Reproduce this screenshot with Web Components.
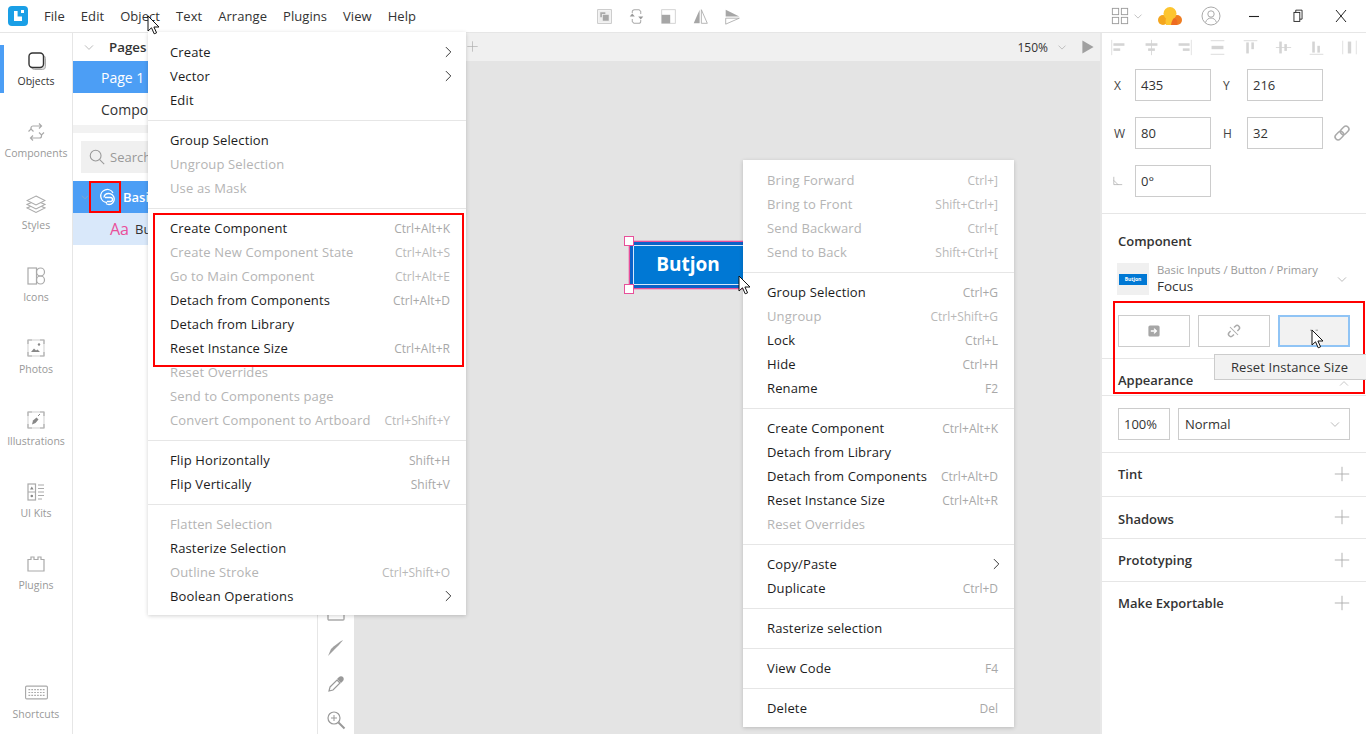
<!DOCTYPE html>
<html lang="en"><head><meta charset="utf-8"><title>Lunacy</title>
<style>
html,body{margin:0;height:100%;overflow:hidden}
body{font-family:"Open Sans","Noto Sans",sans-serif;color:#222;background:#fff}
</style></head><body>
<app-shell>
  <app-titlebar slot="top"></app-titlebar>
  <app-rail slot="rail"></app-rail>
  <app-pages slot="pages"></app-pages>
  <app-tools slot="tools"></app-tools>
  <app-canvas slot="canvas"></app-canvas>
  <app-inspector slot="inspector"></app-inspector>
</app-shell>

<ctx-menu style="left:148px;top:32px;width:318px;--pl:22px" id="m1">
  <menu-row label="Create" arrow></menu-row>
  <menu-row label="Vector" arrow></menu-row>
  <menu-row label="Edit"></menu-row>
  <menu-sep></menu-sep>
  <menu-row label="Group Selection"></menu-row>
  <menu-row label="Ungroup Selection" off></menu-row>
  <menu-row label="Use as Mask" off></menu-row>
  <menu-sep></menu-sep>
  <menu-row label="Create Component" key="Ctrl+Alt+K"></menu-row>
  <menu-row label="Create New Component State" key="Ctrl+Alt+S" off></menu-row>
  <menu-row label="Go to Main Component" key="Ctrl+Alt+E" off></menu-row>
  <menu-row label="Detach from Components" key="Ctrl+Alt+D"></menu-row>
  <menu-row label="Detach from Library"></menu-row>
  <menu-row label="Reset Instance Size" key="Ctrl+Alt+R"></menu-row>
  <menu-row label="Reset Overrides" off></menu-row>
  <menu-row label="Send to Components page" off></menu-row>
  <menu-row label="Convert Component to Artboard" key="Ctrl+Shift+Y" off></menu-row>
  <menu-sep></menu-sep>
  <menu-row label="Flip Horizontally" key="Shift+H"></menu-row>
  <menu-row label="Flip Vertically" key="Shift+V"></menu-row>
  <menu-sep></menu-sep>
  <menu-row label="Flatten Selection" off></menu-row>
  <menu-row label="Rasterize Selection"></menu-row>
  <menu-row label="Outline Stroke" key="Ctrl+Shift+O" off></menu-row>
  <menu-row label="Boolean Operations" arrow></menu-row>
</ctx-menu>

<ctx-menu style="left:743px;top:160px;width:271px;--pl:24px" id="m2">
  <menu-row label="Bring Forward" key="Ctrl+]" off></menu-row>
  <menu-row label="Bring to Front" key="Shift+Ctrl+]" off></menu-row>
  <menu-row label="Send Backward" key="Ctrl+[" off></menu-row>
  <menu-row label="Send to Back" key="Shift+Ctrl+[" off></menu-row>
  <menu-sep></menu-sep>
  <menu-row label="Group Selection" key="Ctrl+G"></menu-row>
  <menu-row label="Ungroup" key="Ctrl+Shift+G" off></menu-row>
  <menu-row label="Lock" key="Ctrl+L"></menu-row>
  <menu-row label="Hide" key="Ctrl+H"></menu-row>
  <menu-row label="Rename" key="F2"></menu-row>
  <menu-sep></menu-sep>
  <menu-row label="Create Component" key="Ctrl+Alt+K"></menu-row>
  <menu-row label="Detach from Library"></menu-row>
  <menu-row label="Detach from Components" key="Ctrl+Alt+D"></menu-row>
  <menu-row label="Reset Instance Size" key="Ctrl+Alt+R"></menu-row>
  <menu-row label="Reset Overrides" off></menu-row>
  <menu-sep></menu-sep>
  <menu-row label="Copy/Paste" arrow></menu-row>
  <menu-row label="Duplicate" key="Ctrl+D"></menu-row>
  <menu-sep></menu-sep>
  <menu-row label="Rasterize selection"></menu-row>
  <menu-sep></menu-sep>
  <menu-row label="View Code" key="F4"></menu-row>
  <menu-sep></menu-sep>
  <menu-row label="Delete" key="Del"></menu-row>
</ctx-menu>

<note-box style="left:153px;top:213px;width:311px;height:154px"></note-box>
<note-box style="left:89px;top:181px;width:32px;height:32px"></note-box>
<note-box style="left:1113px;top:301px;width:252px;height:93px"></note-box>
<tip-box style="left:1214px;top:354px;width:152px;height:26px">Reset Instance Size</tip-box>
<mouse-arrow style="left:147px;top:15px"></mouse-arrow>
<mouse-arrow style="left:738px;top:275px"></mouse-arrow>
<mouse-arrow style="left:1311px;top:329px"></mouse-arrow>

<script>
const I={
objects:'<rect x="5.5" y="5.5" width="14" height="14" rx="3" fill="#ddd" stroke="#aaa"/><rect x="3" y="3" width="14.5" height="14.5" rx="3.5" fill="#fff" stroke="#333" stroke-width="1.4"/>',
components:'<path d="M5 7V6a2 2 0 0 1 2-2h8M13 1.500l2.500 2.500L13 6.500M15.500 13v1a2 2 0 0 1-2 2H5M7 13.500L4.500 16 7 18.500" fill="none" stroke="#aaa" stroke-width="1.2"/><path d="M2.500 9.500L5 7l2.500 2.500M13 10.500l2.500 2.500 2.500-2.500" fill="none" stroke="#aaa" stroke-width="1.200"/>',
styles:'<g fill="#fff" stroke="#aaa" stroke-width="1.1"><path d="M10 10l9 4-9 4.500-9-4.500z"/><path d="M10 6.500l9 4-9 4.500-9-4.500z"/><path d="M10 2l9 4.500-9 4.500-9-4.500z"/></g>',
icons:'<g fill="none" stroke="#aaa" stroke-width="1.2"><rect x="2" y="2" width="8.500" height="16"/><circle cx="14.500" cy="6" r="4"/><circle cx="14.500" cy="14" r="4"/></g>',
photos:'<path d="M2 6V2h4M14 2h4v4M18 14v4h-4M6 18H2v-4" fill="none" stroke="#aaa" stroke-width="1.2"/><path d="M2 2h16v16H2z" fill="none" stroke="#bbb" stroke-width=".7"/><circle cx="13" cy="6.500" r="1.200" fill="#888"/><path d="M5 14l3-3.500 2 2 1.500-1 2.500 2.500z" fill="#888"/>',
illus:'<path d="M2 6V2h4M14 2h4v4M18 14v4h-4M6 18H2v-4" fill="none" stroke="#aaa" stroke-width="1.2"/><path d="M2 2h16v16H2z" fill="none" stroke="#bbb" stroke-width=".7"/><path d="M6 14.500l1-4 3.500-3 2 2-3 3.500z" fill="#888"/><path d="M12 6l2-2" stroke="#888"/>',
kits:'<g fill="none" stroke="#aaa" stroke-width="1.2"><rect x="2" y="2" width="7.500" height="16"/><path d="M2 10h7.500M12 3h6M12 6.500h6M12 10h6M12 13.500h6M12 17h4"/></g><path d="M4 7.500l1.800-3 1.800 3z" fill="#888"/><circle cx="5.800" cy="14" r="1.300" fill="#888"/>',
plugins:'<path d="M2 5.500h3V3h3v2.500h4V3h3v2.500h3V17H2z" fill="none" stroke="#aaa" stroke-width="1.2"/>',
keyboard:'<rect x=".5" y="4.500" width="19" height="11" rx="1" fill="none" stroke="#aaa" stroke-width="1"/><path d="M3 7.500h14M3 10h14M3 12.500h14" stroke="#aaa" stroke-dasharray="1.500 1"/>',
chev:'<path d="M5 8l5 5 5-5" fill="none" stroke="#aaa" stroke-width="1"/>',
chevup:'<path d="M5 12l5-5 5 5" fill="none" stroke="#bbb" stroke-width="1"/>',
search:'<circle cx="8.500" cy="8.500" r="6" fill="none" stroke="#999" stroke-width="1.200"/><path d="M13 13l5 5" stroke="#999" stroke-width="1.200"/>',
link:'<g fill="none" stroke="#aaa" stroke-width="1.500" transform="rotate(-45 10 10)"><rect x="1.500" y="7" width="9.500" height="6" rx="3"/><rect x="9" y="7" width="9.500" height="6" rx="3"/></g>',
unlink:'<g fill="none" stroke="#aaa" stroke-width="1.800" transform="rotate(-45 10 10)"><path d="M7 7H4.500a3 3 0 0 0 0 6H7M13 7h2.500a3 3 0 0 1 0 6H13"/></g><path d="M5 5l10 10" stroke="#aaa" stroke-width="1.300"/>',
goto:'<rect x="3" y="3" width="14" height="14" rx="2" fill="#a6a6a6"/><path d="M6 10h7M10 7l3 3-3 3" fill="none" stroke="#fff" stroke-width="1.600"/>',
reset:'<path d="M5 9h3M12 9h3" stroke="#999" stroke-width="1.200"/>',
plus:'<path d="M10 2v16M2 10h16" stroke="#aaa" stroke-width="1"/>',
arr:'<path d="M7 3l7 7-7 7" fill="none" stroke="#333" stroke-width="1.400"/>',
a1:'<path d="M2 1v18" stroke="#ddd"/><rect x="4" y="5" width="13" height="3" fill="#d4d4d4"/><rect x="4" y="11" width="8" height="3" fill="#d4d4d4"/>',
a2:'<path d="M10 1v18" stroke="#d4d4d4"/><rect x="3" y="5" width="14" height="3" fill="#d4d4d4"/><rect x="6" y="11" width="8" height="3" fill="#d4d4d4"/>',
a3:'<path d="M18 1v18" stroke="#ddd"/><rect x="3" y="5" width="13" height="3" fill="#d4d4d4"/><rect x="8" y="11" width="8" height="3" fill="#d4d4d4"/>',
a4:'<path d="M2 2h16M2 18h16" stroke="#d4d4d4"/><rect x="3" y="8" width="14" height="4" fill="#d4d4d4"/>',
a5:'<path d="M2 2h16" stroke="#d4d4d4"/><rect x="5" y="4" width="3" height="13" fill="#d4d4d4"/><rect x="11" y="4" width="3" height="8" fill="#d4d4d4"/>',
a6:'<path d="M1 10h18" stroke="#d4d4d4"/><rect x="5" y="3" width="3" height="14" fill="#d4d4d4"/><rect x="11" y="6" width="3" height="8" fill="#d4d4d4"/>',
a7:'<path d="M2 18h16" stroke="#d4d4d4"/><rect x="5" y="3" width="3" height="13" fill="#d4d4d4"/><rect x="11" y="8" width="3" height="8" fill="#d4d4d4"/>',
a8:'<path d="M2 2v16M18 2v16" stroke="#ddd"/><rect x="8" y="3" width="4" height="14" fill="#d4d4d4"/>',
t1:'<rect x="2" y="2" width="16" height="16" fill="none" stroke="#bbb"/><rect x="3" y="3" width="14" height="14" fill="#eee"/><path d="M5 5h6v2H7v4H5z" fill="#aaa"/><rect x="8" y="8" width="7" height="7" fill="#a6a6a6"/>',
t2:'<path d="M5 6V4.500A2.500 2.500 0 0 1 7.500 2H13l2 2v3M15 14v1.500a2.500 2.500 0 0 1-2.500 2.500H7l-2-2v-3" fill="none" stroke="#aaa" stroke-width="1.200"/><path d="M2 10h6L5 6.500zM12 10h6l-3 3.500z" fill="#999"/>',
t3:'<rect x="2" y="2" width="16" height="16" fill="none" stroke="#ccc"/><rect x="2" y="8" width="10" height="10" fill="#a6a6a6"/>',
t4:'<path d="M9 2L2 18h7z" fill="#a6a6a6"/><path d="M11 2l7 16h-7z" fill="none" stroke="#aaa"/>',
t5:'<path d="M2 2l16 8H2z" fill="#a6a6a6"/><path d="M2 12h16L2 19z" fill="none" stroke="#aaa"/>',
grid:'<g fill="none" stroke="#999"><rect x="1.500" y="1.500" width="7" height="7"/><rect x="11.500" y="1.500" width="7" height="7"/><rect x="1.500" y="11.500" width="7" height="7"/><rect x="11.500" y="11.500" width="7" height="7"/></g>',
cloud:'<g transform="scale(.8333)"><circle cx="5" cy="16" r="5" fill="#f4a51d"/><circle cx="19" cy="16" r="5" fill="#ef7d22"/><circle cx="12" cy="9.500" r="6.500" fill="#fdc52f"/><path d="M8 21c-1.500-6 1-10 4-10s5.500 4 4 10z" fill="#fdc52f"/><path d="M13 21c.5-3 1-5 3-7 3 1 4 4 3 7z" fill="#ee6b21"/></g>',
user:'<circle cx="10" cy="10" r="9" fill="none" stroke="#aaa"/><circle cx="10" cy="8" r="3.200" fill="none" stroke="#aaa"/><path d="M4.500 16.500c1-3 3-4.500 5.500-4.500s4.500 1.500 5.500 4.500" fill="none" stroke="#aaa"/>',
min:'<path d="M5 10.500h10" stroke="#222" stroke-width="1.100"/>',
restore:'<path d="M7.500 6V3.500h7v10H12" fill="none" stroke="#222"/><rect x="5.500" y="6" width="6.500" height="10" fill="none" stroke="#222"/>',
close:'<path d="M5 4l10 12M15 4L5 16" stroke="#222"/>',
play:'<path d="M3 2l14 8-14 8z" fill="#a0a0a0"/>',
angle:'<path d="M3 3v13h14M3 9l7 7" fill="none" stroke="#999"/>',
sym:'<g fill="none" stroke="#fff" stroke-width="1.300"><path d="M9 15.500A6.500 6.500 0 1 1 15 6"/><path d="M6 10.500a4.500 4.500 0 0 1 4.500-4 5.500 5.500 0 0 1 .5 11 5 5 0 0 1-3-1"/><path d="M7 10.500h5.500a2 2 0 0 1 0 4H9"/></g>',
pen:'<path d="M17 2c-2 3-7 8-9 10l-2 2-4 4 3-7c3-3 8-7 12-9z" fill="#a0a0a0"/>',
drop:'<path d="M4 13l7-7 3 3-7 7-4 1z" fill="#fff" stroke="#999" stroke-width="1.200"/><path d="M11 5l2-2c1-1 3-1 4 0s1 3 0 4l-2 2z" fill="#999"/>',
zoom:'<circle cx="8" cy="8" r="6" fill="none" stroke="#999" stroke-width="1.200"/><path d="M12.500 12.500l6 6" stroke="#999" stroke-width="2"/><path d="M5 8h6M8 5v6" stroke="#999"/>',
rectt:'<rect x="2" y="2" width="16" height="16" rx="1" fill="none" stroke="#aaa" stroke-width="1.400"/>'
};
function def(tag,css,html,init){
  customElements.define(tag,class extends HTMLElement{
    constructor(){super();this.attachShadow({mode:'open'}).innerHTML='<style>'+css+'</style>';}
    connectedCallback(){ if(!this._i){this._i=1;const t=document.createElement('template');t.innerHTML=typeof html==='function'?html(this):html;this.shadowRoot.append(t.content);if(init)init(this);} }
  });
}
def('app-icon',':host{display:inline-flex;width:var(--s,20px);height:var(--s,20px);flex:none}svg{width:100%;height:100%;display:block}',
el=>'<svg viewBox="0 0 20 20">'+(I[el.getAttribute('n')]||'')+'</svg>');
def('app-shell',`:host{display:grid;width:1366px;height:734px;grid-template-columns:73px 245px 36px 1fr 266px;grid-template-rows:33px 1fr}
::slotted([slot=top]){grid-column:1/-1}`,
'<slot name="top"></slot><slot name="rail"></slot><slot name="pages"></slot><slot name="tools"></slot><slot name="canvas"></slot><slot name="inspector"></slot>');
def('app-titlebar',`:host{display:flex;align-items:center;border-bottom:1px solid #e6e6e6;height:32px;position:relative;font-size:13px;letter-spacing:.06px;color:#333}
.logo{margin-left:8px;width:20px;height:20px;border-radius:4px;background:#1a9fe6;position:relative;flex:none}
.logo:after{content:"";position:absolute;left:6px;top:5px;width:8px;height:10px;background:#fff;clip-path:polygon(0 0,45% 0,45% 55%,100% 55%,100% 100%,0 100%)}
.logo:before{content:"";position:absolute;left:13px;top:4px;width:3px;height:3px;background:#fff}
nav{display:flex;gap:16px;margin-left:16px}
.mid{position:absolute;left:596px;display:flex;gap:15px}
.mid app-icon{--s:17px}
.right{margin-left:auto;display:flex;align-items:center}`,
`<div class="logo"></div><nav><span>File</span><span>Edit</span><span>Object</span><span>Text</span><span>Arrange</span><span>Plugins</span><span>View</span><span>Help</span></nav>
<div class="mid"><app-icon n="t1"></app-icon><app-icon n="t2"></app-icon><app-icon n="t3"></app-icon><app-icon n="t4"></app-icon><app-icon n="t5"></app-icon></div>
<div class="right"><app-icon n="grid" style="--s:18px"></app-icon><app-icon n="chev" style="--s:14px;margin-left:2px"></app-icon><app-icon n="cloud" style="--s:24px;margin-left:13px"></app-icon><app-icon n="user" style="--s:20px;margin-left:19px"></app-icon><app-icon n="min" style="margin-left:23px"></app-icon><app-icon n="restore" style="--s:18px;margin-left:25px"></app-icon><app-icon n="close" style="margin-left:24px;margin-right:15px"></app-icon></div>`);
def('rail-item',`:host{display:flex;flex-direction:column;align-items:center;height:72px;box-sizing:border-box;padding-top:5px;font-size:10.500px;color:#999;position:relative}
:host([on]){color:#333}
:host([on]):before{content:"";position:absolute;left:0;top:0;width:4px;height:48px;background:#4c9ef5}
app-icon{margin-bottom:var(--gap,4px)}
span{line-height:14px;white-space:nowrap}`,
el=>`<app-icon n="${el.getAttribute('i')}"></app-icon><span>${el.getAttribute('t')}</span>`);
def('app-rail',`:host{display:flex;flex-direction:column;border-right:1px solid #e6e6e6;padding-top:12px;box-sizing:border-box;height:701px}
.sp{flex:1}`,
`<rail-item i="objects" t="Objects" on></rail-item><rail-item i="components" t="Components"></rail-item><rail-item i="styles" t="Styles"></rail-item><rail-item i="icons" t="Icons"></rail-item><rail-item i="photos" t="Photos"></rail-item><rail-item i="illus" t="Illustrations"></rail-item><rail-item i="kits" t="UI Kits"></rail-item><rail-item i="plugins" t="Plugins"></rail-item><div class="sp"></div><rail-item i="keyboard" t="Shortcuts" style="height:58px;--s:23px;--gap:3px"></rail-item>`);
def('app-pages',`:host{display:flex;flex-direction:column;font-size:14px;color:#333;border-right:1px solid #e6e6e6;overflow:hidden}
.h{height:28px;display:flex;align-items:center;padding-left:8px;font-weight:600;font-size:13.300px;gap:12px;--s:16px;white-space:nowrap}
.r{height:32px;display:flex;align-items:center;padding-left:28px;white-space:nowrap}
.sel{background:#4c9ef5;color:#fff}
.gap{height:8px;background:#f2f2f2}
.s{margin:8px;height:32px;background:#f0f0f0;display:flex;align-items:center;padding-left:7px;gap:4px;color:#999;font-size:13px;--s:18px;width:200px}
.l{height:32px;display:flex;align-items:center;white-space:nowrap;font-size:13px}
.l1{background:#4c9ef5;color:#fff;font-weight:600;padding-left:6px}
.l2{background:#d9e8fa;padding-left:37px;gap:6px}
.aa{color:#e94f9a;font-size:16px}`,
`<div class="h"><app-icon n="chev"></app-icon>Pages</div><div class="r sel">Page 1</div><div class="r">Compo</div><div class="gap"></div>
<div class="s"><app-icon n="search"></app-icon>Search</div>
<div class="l l1"><app-icon n="chev" style="--s:12px;margin-right:7px"></app-icon><app-icon n="sym" style="--s:20px;margin-right:5px"></app-icon>Basi</div>
<div class="l l2"><span class="aa">Aa</span>Bu</div>`);
def('app-tools',`:host{display:flex;flex-direction:column;justify-content:flex-end;align-items:center;gap:16px;padding-bottom:4px;--s:20px;height:701px;box-sizing:border-box;overflow:hidden}`,
`<app-icon n="rectt"></app-icon><app-icon n="pen"></app-icon><app-icon n="drop"></app-icon><app-icon n="zoom"></app-icon>`);
def('app-canvas',`:host{display:flex;flex-direction:column;position:relative;background:#e4e4e4;overflow:hidden}
.tabs{height:28px;background:#f0f0f0;display:flex;align-items:center;font-size:12px;color:#333;flex:none}
.plus{position:absolute;left:112px;top:7px;--s:13px}
.zoom{margin-left:auto;display:flex;align-items:center}
.btn{position:absolute;left:275px;top:208px;width:120px;height:48px;box-sizing:border-box;border:1px solid #e8509a;box-shadow:0 0 0 1px rgba(232,80,154,.3)}
.fill{height:100%;box-sizing:border-box;padding:0 2px 2px 0;background:#0078d4;box-shadow:inset 0 0 0 3px #0b62c8,inset 0 0 0 4px #d5e9fb;display:flex;align-items:center;justify-content:center;color:#fff;font-weight:700;font-size:19px}
.hd{position:absolute;left:270px;width:10px;height:10px;box-sizing:border-box;background:#fff;border:1.500px solid #e8509a}`,
`<div class="tabs"><app-icon class="plus" n="plus"></app-icon><div class="zoom">150%<app-icon n="chev" style="--s:14px;margin-left:7px"></app-icon><app-icon n="play" style="--s:16px;margin:0 4px 0 11px"></app-icon></div></div>
<div class="btn"><div class="fill">Butjon</div></div><i class="hd" style="top:203px"></i><i class="hd" style="top:251px"></i>`);
def('prop-field',`:host{display:flex;align-items:center;box-sizing:border-box;height:32px;border:1px solid #ccc;padding-left:5px;font-size:13px;color:#333;width:76px;background:#fff;flex:none}`,'<slot></slot>');
def('prop-sec',`:host{display:flex;align-items:center;justify-content:space-between;border-top:1px solid #e6e6e6;box-sizing:border-box;padding:0 15px 0 16px;font-weight:600;font-size:13px;color:#333;--s:18px}
span{padding-top:var(--dy,0)}`,
el=>`<span>${el.getAttribute('t')}</span><app-icon n="plus"></app-icon>`);
def('app-inspector',`:host{display:flex;flex-direction:column;border-left:2px solid #e8e8e8;box-sizing:border-box;height:701px;font-size:13px;color:#333;background:#fff;overflow:hidden}
.al{display:flex;height:28px;align-items:center;padding:0 0 0 7.500px;gap:16px;--s:17px;flex:none}
.grid{display:grid;grid-template-columns:33px 76px 36px 76px auto;row-gap:16px;align-items:center;padding:8px 0 16px;border-bottom:1px solid #e6e6e6;height:153px;box-sizing:border-box;flex:none;align-content:start}
.lb{padding-left:12px;font-size:12px;color:#444;display:flex}
.cmp{padding:18px 16px 0;height:145px;box-sizing:border-box;border-bottom:1px solid #e6e6e6;flex:none}
.ht{font-weight:600;line-height:18px}
.inst{display:flex;margin:13px 0 0 -1px;height:32px;align-items:center}
.th{width:32px;height:32px;background:#f0f0f0;display:flex;align-items:center;justify-content:center;flex:none}
.th b{width:28px;height:11px;background:#0078d4;color:#fff;font-size:5px;display:flex;align-items:center;justify-content:center;font-weight:700}
.nm{margin-left:8px;flex:1}
.nm div:first-child{font-size:11.300px;color:#999;line-height:14px}
.nm div:last-child{font-size:13.500px;line-height:18px}
.bs{display:flex;gap:8px;margin-top:20px}
.b{width:72px;height:32px;box-sizing:border-box;border:1px solid #ccc;display:flex;align-items:center;justify-content:center;--s:16px}
.b.hi{border:2px solid #90c4f5;background:#f2f2f2}
.ap{height:37px;display:flex;align-items:center;justify-content:space-between;padding:0 14px 0 16px;font-weight:600;border-bottom:1px solid #e6e6e6;flex:none;box-sizing:border-box}
.ap span{padding-top:6px}
.op{display:flex;gap:8px;padding:12px 16px;height:56px;box-sizing:border-box;flex:none}
.dd{flex:1;justify-content:space-between;padding:0 6px;--s:16px;display:flex}`,
`<div class="al"><app-icon n="a1"></app-icon><app-icon n="a2"></app-icon><app-icon n="a3"></app-icon><app-icon n="a4"></app-icon><app-icon n="a5"></app-icon><app-icon n="a6"></app-icon><app-icon n="a7"></app-icon><app-icon n="a8"></app-icon></div>
<div class="grid">
<span class="lb">X</span><prop-field>435</prop-field><span class="lb">Y</span><prop-field>216</prop-field><span></span>
<span class="lb">W</span><prop-field>80</prop-field><span class="lb">H</span><prop-field>32</prop-field><app-icon n="link" style="margin-left:9px;--s:20px"></app-icon>
<span class="lb"><app-icon n="angle" style="--s:12px;margin-left:-2px"></app-icon></span><prop-field>0°</prop-field>
</div>
<div class="cmp"><div class="ht">Component</div>
<div class="inst"><div class="th"><b>Butjon</b></div><div class="nm"><div>Basic Inputs / Button / Primary</div><div>Focus</div></div><app-icon n="chev" style="--s:16px"></app-icon></div>
<div class="bs"><div class="b"><app-icon n="goto"></app-icon></div><div class="b"><app-icon n="unlink"></app-icon></div><div class="b hi"><app-icon n="reset"></app-icon></div></div></div>
<div class="ap"><span>Appearance</span><app-icon n="chevup" style="--s:16px;margin-top:14px"></app-icon></div>
<div class="op"><prop-field style="width:52px">100%</prop-field><prop-field class="dd"><span>Normal</span><app-icon n="chev"></app-icon></prop-field></div>
<prop-sec t="Tint" style="height:44px;padding-bottom:2px"></prop-sec><prop-sec t="Shadows" style="height:42px;padding-bottom:2px;--dy:4px"></prop-sec><prop-sec t="Prototyping" style="height:43px"></prop-sec><prop-sec t="Make Exportable" style="height:44px;padding-bottom:2px"></prop-sec>`);
def('ctx-menu',`:host{position:absolute;display:block;background:#fff;box-sizing:border-box;padding:8px 0 7px;box-shadow:0 1px 4px rgba(0,0,0,.18);font-size:13px;letter-spacing:.14px;color:#222}`,'<slot></slot>');
def('menu-row',`:host{display:flex;height:24px;align-items:center;justify-content:space-between;padding:0 16px 0 var(--pl,22px);white-space:nowrap;color:#1c1c1c}
:host([off]){color:#b4b4b4}
.k{font-size:12px;letter-spacing:0;color:#a8a8a8}
:host([off]) .k{color:#b8b8b8}
app-icon{--s:14px;margin-right:-5px}`,
el=>`<span>${el.getAttribute('label')}</span>`+(el.hasAttribute('arrow')?'<app-icon n="arr"></app-icon>':'')+(el.getAttribute('key')?`<span class="k">${el.getAttribute('key')}</span>`:''));
def('menu-sep',`:host{display:block;height:1px;background:#e6e6e6;margin:8px 0 7px}`,'');
def('note-box',`:host{position:absolute;box-sizing:border-box;border:2px solid #f00;display:block;pointer-events:none}`,'');
def('tip-box',`:host{position:absolute;box-sizing:border-box;background:#f2f2f2;border:1px solid #ccc;border-right:0;display:flex;align-items:center;padding-left:16px;font-size:13px;letter-spacing:.1px;color:#333;white-space:nowrap}`,'<slot></slot>');
def('mouse-arrow',`:host{position:absolute;display:block;width:14px;height:20px}svg{display:block}`,'<svg width="14" height="20" viewBox="0 0 14 20"><path d="M1 1v15l3.500-3.200 2.700 6 2.400-1-2.700-5.800H12z" fill="#fff" stroke="#111" stroke-width="1"/></svg>');
</script>
</body></html>
